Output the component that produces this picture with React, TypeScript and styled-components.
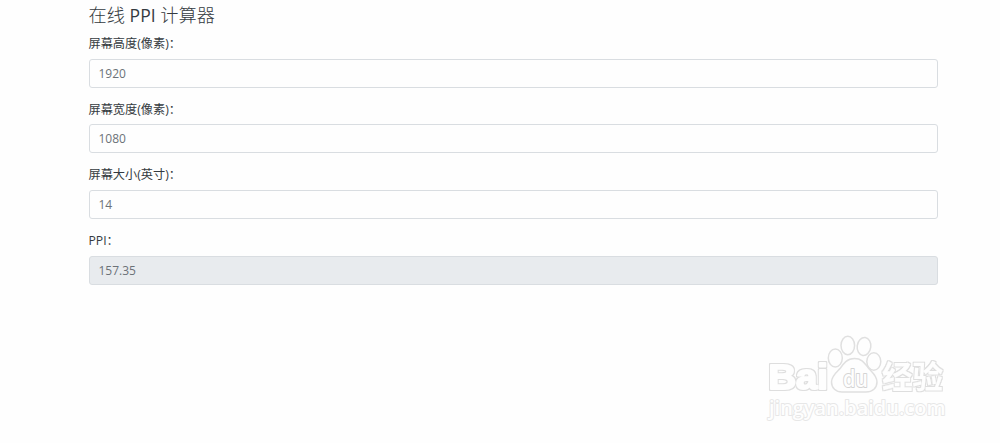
import React from 'react';
import styled, { createGlobalStyle } from 'styled-components';

type Field = {
  id: string;
  label: string;
  value: string;
  readOnly?: boolean;
};

const fields: Field[] = [
  { id: 'height', label: '屏幕高度(像素)：', value: '1920' },
  { id: 'width', label: '屏幕宽度(像素)：', value: '1080' },
  { id: 'size', label: '屏幕大小(英寸)：', value: '14' },
  { id: 'ppi', label: 'PPI：', value: '157.35', readOnly: true },
];

export default function App(): JSX.Element {
  return (
    <>
      <GlobalStyle />
      <Page>
        <Title>
          在线 <Latin>PPI</Latin> 计算器
        </Title>
        <Form>
          {fields.map(({ id, label, value, readOnly }) => (
            <FormGroup key={id}>
              <Label htmlFor={id}>{label}</Label>
              <Input id={id} defaultValue={value} readOnly={readOnly} />
            </FormGroup>
          ))}
        </Form>
        <Watermark />
      </Page>
    </>
  );
}

function Watermark(): JSX.Element {
  return (
    <WatermarkSvg width="200" height="110" viewBox="0 0 200 110">
      <filter id="rim" x="-10%" y="-10%" width="120%" height="120%">
        <feMorphology in="SourceAlpha" operator="dilate" radius="1" result="grown" />
        <feFlood floodColor="#dedede" />
        <feComposite in2="grown" operator="in" />
        <feMerge>
          <feMergeNode />
          <feMergeNode in="SourceGraphic" />
        </feMerge>
      </filter>
      <Brand x="8.5" y="64" size={35.5} textLength="59.5" lengthAdjust="spacingAndGlyphs" filter="url(#rim)">
        Bai
      </Brand>
      <Paw>
        <ellipse cx="75.3" cy="33" rx="7" ry="9" />
        <ellipse cx="87.8" cy="20.5" rx="6.8" ry="9.2" />
        <ellipse cx="104" cy="21.5" rx="6.8" ry="9" transform="rotate(8 104 21.5)" />
        <ellipse cx="113.8" cy="36.5" rx="7" ry="8.7" />
        <path d="M94.5 33.5C87 33.5 83.5 38.5 80.5 43C77 47 71.5 50.5 71.5 57C71.5 63 76 67 82 67H106C112.5 67 117 63 117 57C117 50 111.5 47 108 42.5C104.5 38 102 33.5 94.5 33.5Z" />
      </Paw>
      <Outlined x="83" y="61.5" size={23} textLength="25" lengthAdjust="spacingAndGlyphs">
        du
      </Outlined>
      <Brand x="122" y="63" size={31} slim textLength="61" lengthAdjust="spacingAndGlyphs" filter="url(#rim)">
        经验
      </Brand>
      <Outlined x="9" y="89.5" size={19} light textLength="176.5" lengthAdjust="spacingAndGlyphs">
        jingyan.baidu.com
      </Outlined>
    </WatermarkSvg>
  );
}

const GlobalStyle = createGlobalStyle`
  * {
    box-sizing: border-box;
  }

  body {
    margin: 0;
    background-color: #fefefe;
    color: #212529;
    font-family: 'Open Sans', 'Noto Sans CJK SC', sans-serif;
  }
`;

const Page = styled.main`
  position: relative;
  height: 443px;
  padding: 3px 62.5px 0 88.5px;
  overflow: hidden;
`;

const Title = styled.h1`
  height: 24px;
  margin: 0 0 9px;
  color: #343a40;
  font-size: 18.2px;
  font-weight: 300;
  line-height: 24px;
`;

const Latin = styled.span`
  font-size: 17.5px;
  font-weight: 400;
`;

const Form = styled.form`
  display: grid;
  gap: 14px;
`;

const FormGroup = styled.div`
  display: grid;
  grid-template-rows: 22.6px 29.1px;
`;

const Label = styled.label`
  color: #343a40;
  font-size: 12.2px;
  line-height: 16px;
`;

const Input = styled.input`
  width: 100%;
  height: 29.1px;
  padding: 0 9px;
  border: 1px solid #d9dde1;
  border-radius: 3px;
  background-color: ${({ readOnly }) => (readOnly ? '#e8ebee' : '#fefefe')};
  color: #6c7278;
  font-family: inherit;
  font-size: 12px;
  outline: none;
`;

const WatermarkSvg = styled.svg`
  position: absolute;
  top: 325px;
  left: 760px;
`;

const Brand = styled.text<{ size: number; slim?: boolean }>`
  fill: #fefefe;
  stroke: #fefefe;
  stroke-width: ${({ slim }) => (slim ? 0.2 : 2)};
  stroke-linejoin: round;
  font-family: 'Liberation Sans', 'Noto Sans CJK SC', sans-serif;
  font-size: ${({ size }) => size}px;
  font-weight: bold;
`;

const Outlined = styled.text<{ size: number; light?: boolean }>`
  fill: #fefefe;
  stroke: ${({ light }) => (light ? '#e7e7e7' : '#d4d4d4')};
  stroke-width: ${({ light }) => (light ? 1.8 : 2)};
  stroke-linejoin: round;
  paint-order: stroke;
  font-family: 'Open Sans', sans-serif;
  font-size: ${({ size }) => size}px;
  font-weight: 600;
`;

const Paw = styled.g`
  fill: #fefefe;
  stroke: #e0e0e0;
  stroke-width: 1.5;
`;
